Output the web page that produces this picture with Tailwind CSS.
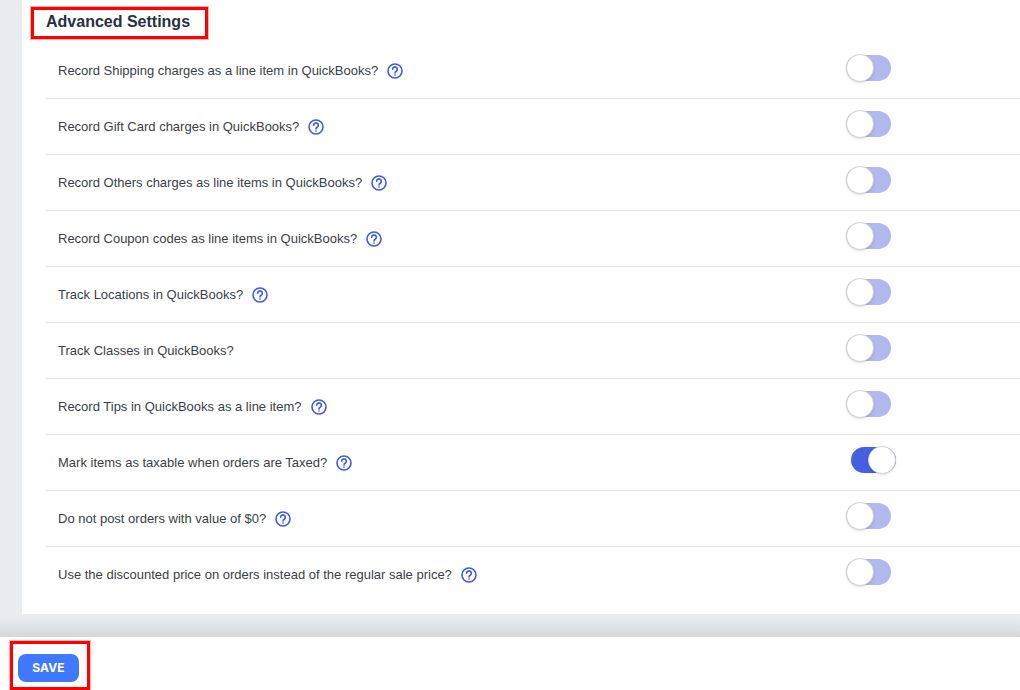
<!DOCTYPE html>
<html lang="en">
<head>
    <meta charset="UTF-8">
    <meta name="viewport" content="width=device-width, initial-scale=1.0">
    <title>Advanced Settings</title>
    <script src="https://cdn.jsdelivr.net/npm/@tailwindcss/browser@4"></script>
</head>
<body class="bg-[#e9ecf1] h-[690px] overflow-hidden relative font-['Liberation_Sans',sans-serif]">
    <div class="h-[637px] pl-[22px] bg-gradient-to-b from-[#e9ecf1] from-[97%] to-[#d3d6db]">
        <!-- Settings card -->
        <div class="bg-white h-[614px] pl-[24px]">
            <h2 class="h-[43px] pt-[12px] text-[16px] leading-[20px] font-bold text-[#2a3142]">Advanced Settings</h2>

            <div class="flex items-center h-[56px] border-b border-[#e3e5e8]">
                <div class="w-[800px] pl-[12px] flex items-center gap-[9px] text-[13px] text-[#3a3f47]">
                    <span>Record Shipping charges as a line item in QuickBooks?</span>
                    <svg class="w-[16px] h-[16px]" viewBox="0 0 16 16" fill="none" stroke="#3f5be0" stroke-width="1.6" stroke-linecap="round"><circle cx="8" cy="8" r="7"/><path d="M5.7 6.2a2.3 2.3 0 1 1 3.5 2c-.8.5-1.2.9-1.2 1.7"/><path d="M8 12v.1"/></svg>
                </div>
                <div class="relative w-[45px] h-[26px] rounded-full bg-[#b1b9ee] -mt-[5px]"><span class="absolute left-0 -top-[1px] w-[28px] h-[28px] rounded-full bg-white border border-[#d5d5d5] shadow-sm"></span></div>
            </div>

            <div class="flex items-center h-[56px] border-b border-[#e3e5e8]">
                <div class="w-[800px] pl-[12px] flex items-center gap-[9px] text-[13px] text-[#3a3f47]">
                    <span>Record Gift Card charges in QuickBooks?</span>
                    <svg class="w-[16px] h-[16px]" viewBox="0 0 16 16" fill="none" stroke="#3f5be0" stroke-width="1.6" stroke-linecap="round"><circle cx="8" cy="8" r="7"/><path d="M5.7 6.2a2.3 2.3 0 1 1 3.5 2c-.8.5-1.2.9-1.2 1.7"/><path d="M8 12v.1"/></svg>
                </div>
                <div class="relative w-[45px] h-[26px] rounded-full bg-[#b1b9ee] -mt-[5px]"><span class="absolute left-0 -top-[1px] w-[28px] h-[28px] rounded-full bg-white border border-[#d5d5d5] shadow-sm"></span></div>
            </div>

            <div class="flex items-center h-[56px] border-b border-[#e3e5e8]">
                <div class="w-[800px] pl-[12px] flex items-center gap-[9px] text-[13px] text-[#3a3f47]">
                    <span>Record Others charges as line items in QuickBooks?</span>
                    <svg class="w-[16px] h-[16px]" viewBox="0 0 16 16" fill="none" stroke="#3f5be0" stroke-width="1.6" stroke-linecap="round"><circle cx="8" cy="8" r="7"/><path d="M5.7 6.2a2.3 2.3 0 1 1 3.5 2c-.8.5-1.2.9-1.2 1.7"/><path d="M8 12v.1"/></svg>
                </div>
                <div class="relative w-[45px] h-[26px] rounded-full bg-[#b1b9ee] -mt-[5px]"><span class="absolute left-0 -top-[1px] w-[28px] h-[28px] rounded-full bg-white border border-[#d5d5d5] shadow-sm"></span></div>
            </div>

            <div class="flex items-center h-[56px] border-b border-[#e3e5e8]">
                <div class="w-[800px] pl-[12px] flex items-center gap-[9px] text-[13px] text-[#3a3f47]">
                    <span>Record Coupon codes as line items in QuickBooks?</span>
                    <svg class="w-[16px] h-[16px]" viewBox="0 0 16 16" fill="none" stroke="#3f5be0" stroke-width="1.6" stroke-linecap="round"><circle cx="8" cy="8" r="7"/><path d="M5.7 6.2a2.3 2.3 0 1 1 3.5 2c-.8.5-1.2.9-1.2 1.7"/><path d="M8 12v.1"/></svg>
                </div>
                <div class="relative w-[45px] h-[26px] rounded-full bg-[#b1b9ee] -mt-[5px]"><span class="absolute left-0 -top-[1px] w-[28px] h-[28px] rounded-full bg-white border border-[#d5d5d5] shadow-sm"></span></div>
            </div>

            <div class="flex items-center h-[56px] border-b border-[#e3e5e8]">
                <div class="w-[800px] pl-[12px] flex items-center gap-[9px] text-[13px] text-[#3a3f47]">
                    <span>Track Locations in QuickBooks?</span>
                    <svg class="w-[16px] h-[16px]" viewBox="0 0 16 16" fill="none" stroke="#3f5be0" stroke-width="1.6" stroke-linecap="round"><circle cx="8" cy="8" r="7"/><path d="M5.7 6.2a2.3 2.3 0 1 1 3.5 2c-.8.5-1.2.9-1.2 1.7"/><path d="M8 12v.1"/></svg>
                </div>
                <div class="relative w-[45px] h-[26px] rounded-full bg-[#b1b9ee] -mt-[5px]"><span class="absolute left-0 -top-[1px] w-[28px] h-[28px] rounded-full bg-white border border-[#d5d5d5] shadow-sm"></span></div>
            </div>

            <div class="flex items-center h-[56px] border-b border-[#e3e5e8]">
                <div class="w-[800px] pl-[12px] flex items-center gap-[9px] text-[13px] text-[#3a3f47]">
                    <span>Track Classes in QuickBooks?</span>
                </div>
                <div class="relative w-[45px] h-[26px] rounded-full bg-[#b1b9ee] -mt-[5px]"><span class="absolute left-0 -top-[1px] w-[28px] h-[28px] rounded-full bg-white border border-[#d5d5d5] shadow-sm"></span></div>
            </div>

            <div class="flex items-center h-[56px] border-b border-[#e3e5e8]">
                <div class="w-[800px] pl-[12px] flex items-center gap-[9px] text-[13px] text-[#3a3f47]">
                    <span>Record Tips in QuickBooks as a line item?</span>
                    <svg class="w-[16px] h-[16px]" viewBox="0 0 16 16" fill="none" stroke="#3f5be0" stroke-width="1.6" stroke-linecap="round"><circle cx="8" cy="8" r="7"/><path d="M5.7 6.2a2.3 2.3 0 1 1 3.5 2c-.8.5-1.2.9-1.2 1.7"/><path d="M8 12v.1"/></svg>
                </div>
                <div class="relative w-[45px] h-[26px] rounded-full bg-[#b1b9ee] -mt-[5px]"><span class="absolute left-0 -top-[1px] w-[28px] h-[28px] rounded-full bg-white border border-[#d5d5d5] shadow-sm"></span></div>
            </div>

            <div class="flex items-center h-[56px] border-b border-[#e3e5e8]">
                <div class="w-[800px] pl-[12px] flex items-center gap-[9px] text-[13px] text-[#3a3f47]">
                    <span>Mark items as taxable when orders are Taxed?</span>
                    <svg class="w-[16px] h-[16px]" viewBox="0 0 16 16" fill="none" stroke="#3f5be0" stroke-width="1.6" stroke-linecap="round"><circle cx="8" cy="8" r="7"/><path d="M5.7 6.2a2.3 2.3 0 1 1 3.5 2c-.8.5-1.2.9-1.2 1.7"/><path d="M8 12v.1"/></svg>
                </div>
                <div class="relative w-[45px] h-[26px] ml-[5px] rounded-full bg-[#4460e0] -mt-[5px]"><span class="absolute right-0 -top-[1px] w-[28px] h-[28px] rounded-full bg-white border border-[#d5d5d5] shadow-sm"></span></div>
            </div>

            <div class="flex items-center h-[56px] border-b border-[#e3e5e8]">
                <div class="w-[800px] pl-[12px] flex items-center gap-[9px] text-[13px] text-[#3a3f47]">
                    <span>Do not post orders with value of $0?</span>
                    <svg class="w-[16px] h-[16px]" viewBox="0 0 16 16" fill="none" stroke="#3f5be0" stroke-width="1.6" stroke-linecap="round"><circle cx="8" cy="8" r="7"/><path d="M5.7 6.2a2.3 2.3 0 1 1 3.5 2c-.8.5-1.2.9-1.2 1.7"/><path d="M8 12v.1"/></svg>
                </div>
                <div class="relative w-[45px] h-[26px] rounded-full bg-[#b1b9ee] -mt-[5px]"><span class="absolute left-0 -top-[1px] w-[28px] h-[28px] rounded-full bg-white border border-[#d5d5d5] shadow-sm"></span></div>
            </div>

            <div class="flex items-center h-[56px] border-b border-transparent">
                <div class="w-[800px] pl-[12px] flex items-center gap-[9px] text-[13px] text-[#3a3f47]">
                    <span>Use the discounted price on orders instead of the regular sale price?</span>
                    <svg class="w-[16px] h-[16px]" viewBox="0 0 16 16" fill="none" stroke="#3f5be0" stroke-width="1.6" stroke-linecap="round"><circle cx="8" cy="8" r="7"/><path d="M5.7 6.2a2.3 2.3 0 1 1 3.5 2c-.8.5-1.2.9-1.2 1.7"/><path d="M8 12v.1"/></svg>
                </div>
                <div class="relative w-[45px] h-[26px] rounded-full bg-[#b1b9ee] -mt-[5px]"><span class="absolute left-0 -top-[1px] w-[28px] h-[28px] rounded-full bg-white border border-[#d5d5d5] shadow-sm"></span></div>
            </div>
        </div>
    </div>

    <!-- Footer -->
    <div class="bg-white h-[53px] pl-[18px] pt-[17px]">
        <button class="w-[61px] h-[28px] rounded-[8px] bg-[#4079fb] text-white text-[12px] tracking-[0.2px] font-bold font-['Inter',sans-serif]">SAVE</button>
    </div>

    <!-- Red annotation boxes -->
    <div class="absolute left-[31px] top-[7px] w-[177px] h-[32px] border-[3px] border-[#ff0000] ring-1 ring-[#ff0000]/30"></div>
    <div class="absolute left-[10px] top-[641px] w-[80px] h-[49px] border-[3px] border-[#ff0000] ring-1 ring-[#ff0000]/30"></div>
</body>
</html>
